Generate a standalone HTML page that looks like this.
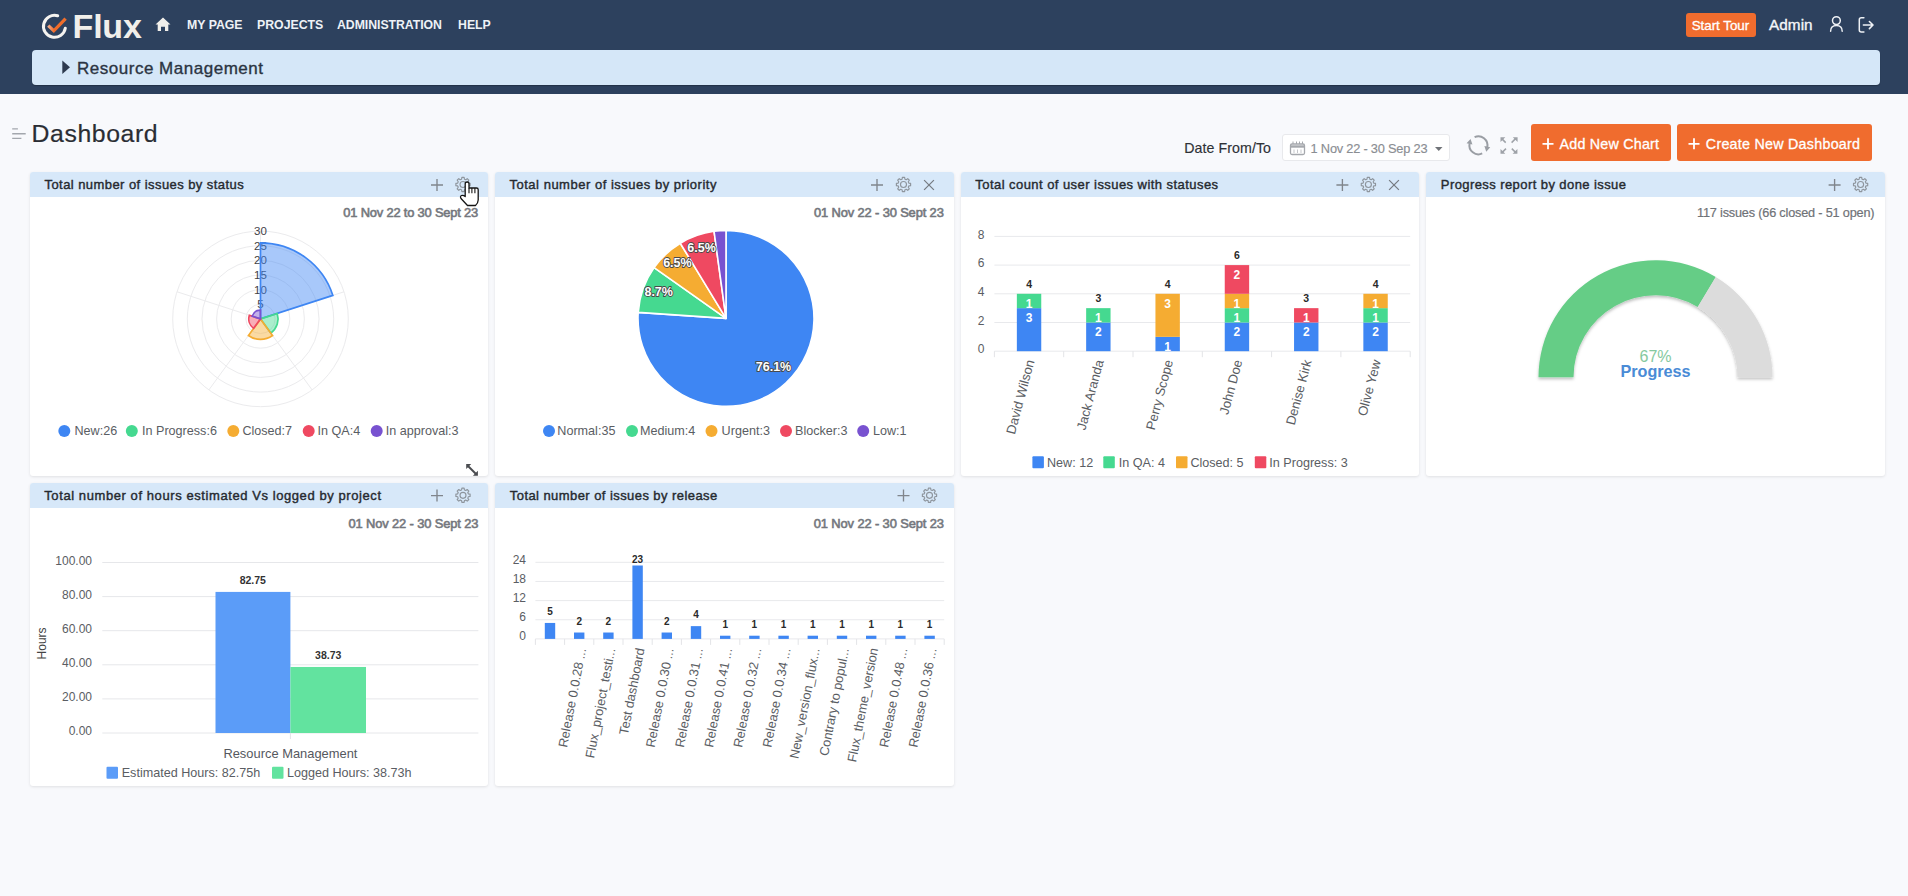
<!DOCTYPE html><html><head><meta charset="utf-8"><title>Dashboard</title><style>
*{box-sizing:border-box;margin:0;padding:0}
html,body{width:1908px;height:896px;overflow:hidden}
body{background:#f8f9fc;font-family:"Liberation Sans",sans-serif;position:relative;color:#2b2b2b}
.abs{position:absolute}
.hdr{left:0;top:0;width:1908px;height:94px;background:#2d415e}
.nav{color:#eef2f7;font-weight:bold;font-size:12.3px;top:17px;line-height:16px;white-space:nowrap}
.crumb{left:32px;top:50px;width:1848px;height:35px;background:#d5e7f8;border-radius:4px;box-shadow:0 1px 1px rgba(0,0,0,.25)}
.card{background:#fff;border-radius:3px;box-shadow:0 1px 3px rgba(0,0,0,.10)}
.chead{position:absolute;left:0;top:0;right:0;height:25px;background:#d7e8f9;border-radius:3px 3px 0 0}
.ctitle{position:absolute;left:14px;top:5px;font-size:13px;font-weight:normal;-webkit-text-stroke:0.4px #262a30;color:#262a30;white-space:nowrap;line-height:16px}
.btn{background:#f06c2e;color:#fff;border-radius:3px;font-size:14px;white-space:nowrap}
</style></head><body>
<div class="abs hdr"></div>
<div class="abs crumb"></div>
<svg class="abs" style="left:0;top:0" width="520" height="94" viewBox="0 0 520 94">
<defs><linearGradient id="ckg" x1="48" y1="0" x2="66" y2="0" gradientUnits="userSpaceOnUse"><stop offset="0" stop-color="#f7b08e"/><stop offset="0.35" stop-color="#f06a28"/><stop offset="1" stop-color="#ee6f2c"/></linearGradient></defs>
<path d="M 57.7 15.8 A 11 11 0 1 0 65.3 28.2" fill="none" stroke="#f5f3f0" stroke-width="3" stroke-linecap="round"/>
<path d="M 48.3 25.6 L 53.8 30.8 L 65.6 18.6" fill="none" stroke="url(#ckg)" stroke-width="3.3" stroke-linejoin="miter"/>
<path d="M 155.5 24.6 L 163 17.6 L 170.5 24.6 L 168.3 24.6 L 168.3 31 L 165 31 L 165 26.8 L 161 26.8 L 161 31 L 157.7 31 L 157.7 24.6 Z" fill="#f1efea"/>
</svg>
<div class="abs nav" style="left:187px">MY PAGE</div>
<div class="abs nav" style="left:257px">PROJECTS</div>
<div class="abs nav" style="left:337px;letter-spacing:-0.05px">ADMINISTRATION</div>
<div class="abs nav" style="left:458px">HELP</div>
<svg class="abs" style="left:1820px;top:10px" width="70" height="30" viewBox="1820 10 70 30">
<circle cx="1836.4" cy="20.6" r="3.9" fill="none" stroke="#eef1f5" stroke-width="1.5"/>
<path d="M 1830.6 31.2 C 1830.6 27.5 1833 25.4 1836.4 25.4 C 1839.8 25.4 1842.2 27.5 1842.2 31.2" fill="none" stroke="#eef1f5" stroke-width="1.5" stroke-linecap="round"/>
<path d="M 1863.9 17.8 H 1861.3 Q 1859.3 17.8 1859.3 19.8 V 29.9 Q 1859.3 31.9 1861.3 31.9 H 1863.9" fill="none" stroke="#eef1f5" stroke-width="1.5" stroke-linecap="round"/>
<path d="M 1863.4 25 H 1872.6 M 1869.4 21.5 L 1873 25 L 1869.4 28.6" fill="none" stroke="#eef1f5" stroke-width="1.6" stroke-linecap="round" stroke-linejoin="round"/>
</svg>
<svg class="abs" style="left:60px;top:58px" width="14" height="18" viewBox="60 58 14 18"><path d="M 62.3 60.5 L 70 67.3 L 62.3 74 Z" fill="#2d3a4f"/></svg>
<svg class="abs" style="left:8px;top:122px" width="22" height="22" viewBox="8 122 22 22">
<path d="M 12.2 128.9 H 17.9 M 12.2 133.8 H 25.7 M 12.2 138.4 H 21.4" stroke="#a3a7ad" stroke-width="1.4"/></svg>
<div class="abs" style="left:1282px;top:134px;width:168px;height:27px;background:#fff;border:1px solid #e8e9ec;border-radius:3px"></div>
<div class="abs btn" style="left:1686px;top:13px;width:70px;height:23.5px"></div>
<svg class="abs" style="left:1280px;top:130px" width="260" height="35" viewBox="1280 130 260 35">
<rect x="1290.5" y="144" width="14" height="10.5" rx="1.5" fill="none" stroke="#a5a8ad" stroke-width="1.3"/>
<path d="M 1290.5 146.5 H 1304.5" stroke="#a5a8ad" stroke-width="2.4"/>
<path d="M 1293 141.5 V 144 M 1296.5 141.5 V 144 M 1299.5 141.5 V 144 M 1302.5 141.5 V 144" stroke="#a5a8ad" stroke-width="1"/>
<path d="M 1294 149.5 V 153 M 1297.5 149.5 V 153 M 1301 149.5 V 153" stroke="#c5c7cb" stroke-width="1"/>
<path d="M 1435 147 L 1442.5 147 L 1438.75 151 Z" fill="#707378"/>
<path d="M 1474.60 137.14 A 9.0 9.0 0 0 1 1487.20 147.17 M 1482.20 153.46 A 9.0 9.0 0 0 1 1469.60 143.43" fill="none" stroke="#9a9ea4" stroke-width="2"/>
<path d="M 1486.25 151.67 L 1490.24 147.31 L 1484.37 146.06 Z M 1470.55 138.93 L 1466.56 143.29 L 1472.43 144.54 Z" fill="#9a9ea4"/>
<path d="M 1505.7 142.6 L 1502 138.9 M 1511.6 142.6 L 1515.8 138.4 M 1506 148.6 L 1502 152.6 M 1511.8 148.6 L 1515.8 152.6" stroke="#9ea2a8" stroke-width="1.5" fill="none"/>
<path d="M 1500.5 137.3 H 1505.3 L 1500.5 142.1 Z M 1517.6 137.3 H 1512.8 L 1517.6 142.1 Z M 1500.5 153.8 H 1505.3 L 1500.5 149 Z M 1517.4 153.8 H 1512.6 L 1517.4 149 Z" fill="#9ea2a8"/>
</svg>
<div class="abs btn" style="left:1531px;top:124px;width:140px;height:37px"></div>
<div class="abs btn" style="left:1677px;top:124px;width:195px;height:37px"></div>
<svg class="abs" style="left:1530px;top:130px" width="180" height="30" viewBox="1530 130 180 30">
<path d="M 1542.5 143.8 H 1553.5 M 1548 138.3 V 149.3 M 1688.5 143.8 H 1699.5 M 1694 138.3 V 149.3" stroke="#fff" stroke-width="1.8"/></svg>
<div class="abs card" style="left:30px;top:172px;width:458px;height:304px"><div class="chead"></div></div>
<div class="abs card" style="left:495px;top:172px;width:459px;height:304px"><div class="chead"></div></div>
<div class="abs card" style="left:961px;top:172px;width:458px;height:304px"><div class="chead"></div></div>
<div class="abs card" style="left:1426px;top:172px;width:459px;height:304px"><div class="chead"></div></div>
<div class="abs card" style="left:30px;top:483px;width:458px;height:303px"><div class="chead"></div></div>
<div class="abs card" style="left:495px;top:483px;width:459px;height:303px"><div class="chead"></div></div>
<svg class="abs" style="left:0;top:0;font-family:'Liberation Sans',sans-serif" width="1908" height="896" viewBox="0 0 1908 896"><text x="72.6" y="37.8" font-size="34" fill="#f1efea" font-weight="bold" textLength="69.2" lengthAdjust="spacing">Flux</text><text x="1691.7" y="29.5" font-size="13.4" fill="#ffffff" font-weight="normal" textLength="57.5" lengthAdjust="spacing" stroke="#ffffff" stroke-width="0.3">Start Tour</text><text x="1769" y="29.5" font-size="15.3" fill="#f4f6f9" font-weight="normal" textLength="43.6" lengthAdjust="spacing" stroke="#f4f6f9" stroke-width="0.35">Admin</text><text x="77" y="73.8" font-size="17" fill="#2b3442" font-weight="normal" textLength="186.0" lengthAdjust="spacing" stroke="#2b3442" stroke-width="0.35">Resource Management</text><text x="31.5" y="141.6" font-size="24.8" fill="#2a2d33" font-weight="normal" textLength="126.1" lengthAdjust="spacing" stroke="#2a2d33" stroke-width="0.2">Dashboard</text><text x="1184.2" y="152.5" font-size="14.2" fill="#2e3136" font-weight="normal" textLength="86.8" lengthAdjust="spacing" stroke="#2e3136" stroke-width="0.15">Date From/To</text><text x="1310.6" y="153" font-size="12.8" fill="#8a8d92" font-weight="normal" textLength="116.9" lengthAdjust="spacing" stroke="#8a8d92" stroke-width="0.15">1 Nov 22 - 30 Sep 23</text><text x="1559.5" y="148.6" font-size="14.3" fill="#ffffff" font-weight="normal" textLength="99.5" lengthAdjust="spacing" stroke="#ffffff" stroke-width="0.3">Add New Chart</text><text x="1705.8" y="148.6" font-size="14.3" fill="#ffffff" font-weight="normal" textLength="154.2" lengthAdjust="spacing" stroke="#ffffff" stroke-width="0.3">Create New Dashboard</text><text x="44.5" y="189" font-size="13" fill="#262a30" font-weight="normal" textLength="199.2" lengthAdjust="spacing" stroke="#262a30" stroke-width="0.4">Total number of issues by status</text><text x="509.5" y="189" font-size="13" fill="#262a30" font-weight="normal" textLength="206.9" lengthAdjust="spacing" stroke="#262a30" stroke-width="0.4">Total number of issues by priority</text><text x="975.3" y="189" font-size="13" fill="#262a30" font-weight="normal" textLength="242.8" lengthAdjust="spacing" stroke="#262a30" stroke-width="0.4">Total count of user issues with statuses</text><text x="1440.8" y="189" font-size="13" fill="#262a30" font-weight="normal" textLength="185.2" lengthAdjust="spacing" stroke="#262a30" stroke-width="0.4">Progress report by done issue</text><text x="44.3" y="500" font-size="13" fill="#262a30" font-weight="normal" textLength="336.7" lengthAdjust="spacing" stroke="#262a30" stroke-width="0.4">Total number of hours estimated Vs logged by project</text><text x="509.8" y="500" font-size="13" fill="#262a30" font-weight="normal" textLength="207.4" lengthAdjust="spacing" stroke="#262a30" stroke-width="0.4">Total number of issues by release</text><path d="M 431 185 H 443 M 437 179 V 191" stroke="#80858c" stroke-width="1.35"/><path d="M 460.90 179.42 L 461.58 179.19 L 461.87 177.39 L 464.13 177.39 L 464.42 179.19 L 465.10 179.42 L 465.75 179.74 L 467.23 178.68 L 468.82 180.27 L 467.76 181.75 L 468.08 182.40 L 468.31 183.08 L 470.11 183.37 L 470.11 185.63 L 468.31 185.92 L 468.08 186.60 L 467.76 187.25 L 468.82 188.73 L 467.23 190.32 L 465.75 189.26 L 465.10 189.58 L 464.42 189.81 L 464.13 191.61 L 461.87 191.61 L 461.58 189.81 L 460.90 189.58 L 460.25 189.26 L 458.77 190.32 L 457.18 188.73 L 458.24 187.25 L 457.92 186.60 L 457.69 185.92 L 455.89 185.63 L 455.89 183.37 L 457.69 183.08 L 457.92 182.40 L 458.24 181.75 L 457.18 180.27 L 458.77 178.68 L 460.25 179.74 Z" fill="none" stroke="#8e959d" stroke-width="1.15" stroke-linejoin="round"/><circle cx="463" cy="184.5" r="3" fill="none" stroke="#8e959d" stroke-width="1.15"/><path d="M 871 185 H 883 M 877 179 V 191" stroke="#80858c" stroke-width="1.35"/><path d="M 901.40 179.42 L 902.08 179.19 L 902.37 177.39 L 904.63 177.39 L 904.92 179.19 L 905.60 179.42 L 906.25 179.74 L 907.73 178.68 L 909.32 180.27 L 908.26 181.75 L 908.58 182.40 L 908.81 183.08 L 910.61 183.37 L 910.61 185.63 L 908.81 185.92 L 908.58 186.60 L 908.26 187.25 L 909.32 188.73 L 907.73 190.32 L 906.25 189.26 L 905.60 189.58 L 904.92 189.81 L 904.63 191.61 L 902.37 191.61 L 902.08 189.81 L 901.40 189.58 L 900.75 189.26 L 899.27 190.32 L 897.68 188.73 L 898.74 187.25 L 898.42 186.60 L 898.19 185.92 L 896.39 185.63 L 896.39 183.37 L 898.19 183.08 L 898.42 182.40 L 898.74 181.75 L 897.68 180.27 L 899.27 178.68 L 900.75 179.74 Z" fill="none" stroke="#8e959d" stroke-width="1.15" stroke-linejoin="round"/><circle cx="903.5" cy="184.5" r="3" fill="none" stroke="#8e959d" stroke-width="1.15"/><path d="M 924.1 180.1 L 933.9 189.9 M 933.9 180.1 L 924.1 189.9" stroke="#767b82" stroke-width="1.25"/><path d="M 1336.4 185 H 1348.4 M 1342.4 179 V 191" stroke="#80858c" stroke-width="1.35"/><path d="M 1366.30 179.42 L 1366.98 179.19 L 1367.27 177.39 L 1369.53 177.39 L 1369.82 179.19 L 1370.50 179.42 L 1371.15 179.74 L 1372.63 178.68 L 1374.22 180.27 L 1373.16 181.75 L 1373.48 182.40 L 1373.71 183.08 L 1375.51 183.37 L 1375.51 185.63 L 1373.71 185.92 L 1373.48 186.60 L 1373.16 187.25 L 1374.22 188.73 L 1372.63 190.32 L 1371.15 189.26 L 1370.50 189.58 L 1369.82 189.81 L 1369.53 191.61 L 1367.27 191.61 L 1366.98 189.81 L 1366.30 189.58 L 1365.65 189.26 L 1364.17 190.32 L 1362.58 188.73 L 1363.64 187.25 L 1363.32 186.60 L 1363.09 185.92 L 1361.29 185.63 L 1361.29 183.37 L 1363.09 183.08 L 1363.32 182.40 L 1363.64 181.75 L 1362.58 180.27 L 1364.17 178.68 L 1365.65 179.74 Z" fill="none" stroke="#8e959d" stroke-width="1.15" stroke-linejoin="round"/><circle cx="1368.4" cy="184.5" r="3" fill="none" stroke="#8e959d" stroke-width="1.15"/><path d="M 1389.1 180.1 L 1398.9 189.9 M 1398.9 180.1 L 1389.1 189.9" stroke="#767b82" stroke-width="1.25"/><path d="M 1828.6 185 H 1840.6 M 1834.6 179 V 191" stroke="#80858c" stroke-width="1.35"/><path d="M 1858.50 179.42 L 1859.18 179.19 L 1859.47 177.39 L 1861.73 177.39 L 1862.02 179.19 L 1862.70 179.42 L 1863.35 179.74 L 1864.83 178.68 L 1866.42 180.27 L 1865.36 181.75 L 1865.68 182.40 L 1865.91 183.08 L 1867.71 183.37 L 1867.71 185.63 L 1865.91 185.92 L 1865.68 186.60 L 1865.36 187.25 L 1866.42 188.73 L 1864.83 190.32 L 1863.35 189.26 L 1862.70 189.58 L 1862.02 189.81 L 1861.73 191.61 L 1859.47 191.61 L 1859.18 189.81 L 1858.50 189.58 L 1857.85 189.26 L 1856.37 190.32 L 1854.78 188.73 L 1855.84 187.25 L 1855.52 186.60 L 1855.29 185.92 L 1853.49 185.63 L 1853.49 183.37 L 1855.29 183.08 L 1855.52 182.40 L 1855.84 181.75 L 1854.78 180.27 L 1856.37 178.68 L 1857.85 179.74 Z" fill="none" stroke="#8e959d" stroke-width="1.15" stroke-linejoin="round"/><circle cx="1860.6" cy="184.5" r="3" fill="none" stroke="#8e959d" stroke-width="1.15"/><path d="M 431 495.6 H 443 M 437 489.6 V 501.6" stroke="#80858c" stroke-width="1.35"/><path d="M 460.90 490.22 L 461.58 489.99 L 461.87 488.19 L 464.13 488.19 L 464.42 489.99 L 465.10 490.22 L 465.75 490.54 L 467.23 489.48 L 468.82 491.07 L 467.76 492.55 L 468.08 493.20 L 468.31 493.88 L 470.11 494.17 L 470.11 496.43 L 468.31 496.72 L 468.08 497.40 L 467.76 498.05 L 468.82 499.53 L 467.23 501.12 L 465.75 500.06 L 465.10 500.38 L 464.42 500.61 L 464.13 502.41 L 461.87 502.41 L 461.58 500.61 L 460.90 500.38 L 460.25 500.06 L 458.77 501.12 L 457.18 499.53 L 458.24 498.05 L 457.92 497.40 L 457.69 496.72 L 455.89 496.43 L 455.89 494.17 L 457.69 493.88 L 457.92 493.20 L 458.24 492.55 L 457.18 491.07 L 458.77 489.48 L 460.25 490.54 Z" fill="none" stroke="#8e959d" stroke-width="1.15" stroke-linejoin="round"/><circle cx="463" cy="495.3" r="3" fill="none" stroke="#8e959d" stroke-width="1.15"/><path d="M 897.5 495.6 H 909.5 M 903.5 489.6 V 501.6" stroke="#80858c" stroke-width="1.35"/><path d="M 927.40 490.22 L 928.08 489.99 L 928.37 488.19 L 930.63 488.19 L 930.92 489.99 L 931.60 490.22 L 932.25 490.54 L 933.73 489.48 L 935.32 491.07 L 934.26 492.55 L 934.58 493.20 L 934.81 493.88 L 936.61 494.17 L 936.61 496.43 L 934.81 496.72 L 934.58 497.40 L 934.26 498.05 L 935.32 499.53 L 933.73 501.12 L 932.25 500.06 L 931.60 500.38 L 930.92 500.61 L 930.63 502.41 L 928.37 502.41 L 928.08 500.61 L 927.40 500.38 L 926.75 500.06 L 925.27 501.12 L 923.68 499.53 L 924.74 498.05 L 924.42 497.40 L 924.19 496.72 L 922.39 496.43 L 922.39 494.17 L 924.19 493.88 L 924.42 493.20 L 924.74 492.55 L 923.68 491.07 L 925.27 489.48 L 926.75 490.54 Z" fill="none" stroke="#8e959d" stroke-width="1.15" stroke-linejoin="round"/><circle cx="929.5" cy="495.3" r="3" fill="none" stroke="#8e959d" stroke-width="1.15"/><text x="343.3" y="217.2" font-size="12.9" fill="#74777d" font-weight="normal" textLength="134.9" lengthAdjust="spacing" stroke="#74777d" stroke-width="0.6">01 Nov 22 to 30 Sept 23</text><text x="814" y="217.2" font-size="12.9" fill="#74777d" font-weight="normal" textLength="129.8" lengthAdjust="spacing" stroke="#74777d" stroke-width="0.6">01 Nov 22 - 30 Sept 23</text><text x="348.4" y="528.3" font-size="12.9" fill="#74777d" font-weight="normal" textLength="130.0" lengthAdjust="spacing" stroke="#74777d" stroke-width="0.6">01 Nov 22 - 30 Sept 23</text><text x="813.8" y="528.3" font-size="12.9" fill="#74777d" font-weight="normal" textLength="130.1" lengthAdjust="spacing" stroke="#74777d" stroke-width="0.6">01 Nov 22 - 30 Sept 23</text><text x="1697" y="217" font-size="12.7" fill="#6f7277" font-weight="normal" textLength="177.5" lengthAdjust="spacing" stroke="#6f7277" stroke-width="0.2">117 issues (66 closed - 51 open)</text><circle cx="260.5" cy="318.9" r="14.63" fill="none" stroke="#ebebed" stroke-width="1"/><circle cx="260.5" cy="318.9" r="29.27" fill="none" stroke="#ebebed" stroke-width="1"/><circle cx="260.5" cy="318.9" r="43.90" fill="none" stroke="#ebebed" stroke-width="1"/><circle cx="260.5" cy="318.9" r="58.53" fill="none" stroke="#ebebed" stroke-width="1"/><circle cx="260.5" cy="318.9" r="73.17" fill="none" stroke="#ebebed" stroke-width="1"/><circle cx="260.5" cy="318.9" r="87.80" fill="none" stroke="#ebebed" stroke-width="1"/><line x1="260.5" y1="318.9" x2="260.50" y2="231.10" stroke="#ebebed" stroke-width="1"/><line x1="260.5" y1="318.9" x2="344.00" y2="291.77" stroke="#ebebed" stroke-width="1"/><line x1="260.5" y1="318.9" x2="312.11" y2="389.93" stroke="#ebebed" stroke-width="1"/><line x1="260.5" y1="318.9" x2="208.89" y2="389.93" stroke="#ebebed" stroke-width="1"/><line x1="260.5" y1="318.9" x2="177.00" y2="291.77" stroke="#ebebed" stroke-width="1"/><text x="260.5" y="308.26666666666665" font-size="11.5" fill="#3f4247" text-anchor="middle" font-weight="normal" >5</text><text x="260.5" y="293.6333333333333" font-size="11.5" fill="#3f4247" text-anchor="middle" font-weight="normal" >10</text><text x="260.5" y="279.0" font-size="11.5" fill="#3f4247" text-anchor="middle" font-weight="normal" >15</text><text x="260.5" y="264.3666666666667" font-size="11.5" fill="#3f4247" text-anchor="middle" font-weight="normal" >20</text><text x="260.5" y="249.7333333333333" font-size="11.5" fill="#3f4247" text-anchor="middle" font-weight="normal" >25</text><text x="260.5" y="235.09999999999997" font-size="11.5" fill="#3f4247" text-anchor="middle" font-weight="normal" >30</text><path d="M 260.5 318.9 L 260.50 242.81 A 76.09 76.09 0 0 1 332.87 295.39 Z" fill="#3e86f3" fill-opacity="0.45" stroke="#3e86f3" stroke-width="1.7"/><path d="M 260.5 318.9 L 277.20 313.47 A 17.56 17.56 0 0 1 270.82 333.11 Z" fill="#45d990" fill-opacity="0.45" stroke="#45d990" stroke-width="1.7"/><path d="M 260.5 318.9 L 272.54 335.47 A 20.49 20.49 0 0 1 248.46 335.47 Z" fill="#f5ac32" fill-opacity="0.45" stroke="#f5ac32" stroke-width="1.7"/><path d="M 260.5 318.9 L 253.62 328.37 A 11.71 11.71 0 0 1 249.37 315.28 Z" fill="#ef4961" fill-opacity="0.45" stroke="#ef4961" stroke-width="1.7"/><path d="M 260.5 318.9 L 252.15 316.19 A 8.78 8.78 0 0 1 260.50 310.12 Z" fill="#7852d0" fill-opacity="0.45" stroke="#7852d0" stroke-width="1.7"/><circle cx="64.3" cy="431.0" r="6" fill="#3e86f3"/><text x="74.5" y="434.8" font-size="12.6" fill="#5a5d63" text-anchor="start" font-weight="normal" >New:26</text><circle cx="131.8" cy="431.0" r="6" fill="#45d990"/><text x="142" y="434.8" font-size="12.6" fill="#5a5d63" text-anchor="start" font-weight="normal" >In Progress:6</text><circle cx="233.3" cy="431.0" r="6" fill="#f5ac32"/><text x="242.4" y="434.8" font-size="12.6" fill="#5a5d63" text-anchor="start" font-weight="normal" >Closed:7</text><circle cx="308.7" cy="431.0" r="6" fill="#ef4961"/><text x="317.5" y="434.8" font-size="12.6" fill="#5a5d63" text-anchor="start" font-weight="normal" >In QA:4</text><circle cx="376.7" cy="431.0" r="6" fill="#7852d0"/><text x="385.7" y="434.8" font-size="12.6" fill="#5a5d63" text-anchor="start" font-weight="normal" >In approval:3</text><path d="M 468 466 L 476 474" stroke="#4a4c50" stroke-width="2" fill="none"/><path d="M 466.2 463.9 L 471.2 463.9 L 466.2 468.9 Z M 477.9 475.8 L 472.9 475.8 L 477.9 470.8 Z" fill="#4a4c50"/><path d="M 726 318.4 L 726.00 230.40 A 88.00 88.00 0 1 1 638.21 312.39 Z" fill="#3e86f3" stroke="#fff" stroke-width="1.6" stroke-linejoin="round"/><path d="M 726 318.4 L 638.21 312.39 A 88.00 88.00 0 0 1 654.11 267.65 Z" fill="#45d990" stroke="#fff" stroke-width="1.6" stroke-linejoin="round"/><path d="M 726 318.4 L 654.11 267.65 A 88.00 88.00 0 0 1 680.28 243.21 Z" fill="#f5ac32" stroke="#fff" stroke-width="1.6" stroke-linejoin="round"/><path d="M 726 318.4 L 680.28 243.21 A 88.00 88.00 0 0 1 714.02 231.22 Z" fill="#ef4961" stroke="#fff" stroke-width="1.6" stroke-linejoin="round"/><path d="M 726 318.4 L 714.02 231.22 A 88.00 88.00 0 0 1 726.00 230.40 Z" fill="#7852d0" stroke="#fff" stroke-width="1.6" stroke-linejoin="round"/><text x="773.5" y="370.5" font-size="12.5" fill="#fff" text-anchor="middle" font-weight="bold" paint-order="stroke" stroke="#4a4a4a" stroke-width="1.8" stroke-linejoin="round">76.1%</text><text x="658.7" y="295.5" font-size="12.5" fill="#fff" text-anchor="middle" font-weight="bold" paint-order="stroke" stroke="#4a4a4a" stroke-width="1.8" stroke-linejoin="round">8.7%</text><text x="677.4" y="267" font-size="12.5" fill="#fff" text-anchor="middle" font-weight="bold" paint-order="stroke" stroke="#4a4a4a" stroke-width="1.8" stroke-linejoin="round">6.5%</text><text x="701.6" y="252" font-size="12.5" fill="#fff" text-anchor="middle" font-weight="bold" paint-order="stroke" stroke="#4a4a4a" stroke-width="1.8" stroke-linejoin="round">6.5%</text><circle cx="549" cy="431.0" r="6" fill="#3e86f3"/><text x="557.3" y="434.8" font-size="12.6" fill="#5a5d63" text-anchor="start" font-weight="normal" >Normal:35</text><circle cx="632" cy="431.0" r="6" fill="#45d990"/><text x="640" y="434.8" font-size="12.6" fill="#5a5d63" text-anchor="start" font-weight="normal" >Medium:4</text><circle cx="711.5" cy="431.0" r="6" fill="#f5ac32"/><text x="721.6" y="434.8" font-size="12.6" fill="#5a5d63" text-anchor="start" font-weight="normal" >Urgent:3</text><circle cx="786" cy="431.0" r="6" fill="#ef4961"/><text x="795" y="434.8" font-size="12.6" fill="#5a5d63" text-anchor="start" font-weight="normal" >Blocker:3</text><circle cx="863.2" cy="431.0" r="6" fill="#7852d0"/><text x="872.9" y="434.8" font-size="12.6" fill="#5a5d63" text-anchor="start" font-weight="normal" >Low:1</text><line x1="994.4" y1="351.20" x2="1410.2" y2="351.20" stroke="#e8e9ec" stroke-width="1"/><text x="984.5" y="353.4" font-size="12" fill="#5a5d63" text-anchor="end" font-weight="normal" >0</text><line x1="994.4" y1="322.50" x2="1410.2" y2="322.50" stroke="#e8e9ec" stroke-width="1"/><text x="984.5" y="324.7" font-size="12" fill="#5a5d63" text-anchor="end" font-weight="normal" >2</text><line x1="994.4" y1="293.80" x2="1410.2" y2="293.80" stroke="#e8e9ec" stroke-width="1"/><text x="984.5" y="296.0" font-size="12" fill="#5a5d63" text-anchor="end" font-weight="normal" >4</text><line x1="994.4" y1="265.10" x2="1410.2" y2="265.10" stroke="#e8e9ec" stroke-width="1"/><text x="984.5" y="267.3" font-size="12" fill="#5a5d63" text-anchor="end" font-weight="normal" >6</text><line x1="994.4" y1="236.40" x2="1410.2" y2="236.40" stroke="#e8e9ec" stroke-width="1"/><text x="984.5" y="238.59999999999997" font-size="12" fill="#5a5d63" text-anchor="end" font-weight="normal" >8</text><line x1="994.40" y1="351.2" x2="994.40" y2="357.2" stroke="#e3e4e7" stroke-width="1"/><line x1="1063.70" y1="351.2" x2="1063.70" y2="357.2" stroke="#e3e4e7" stroke-width="1"/><line x1="1133.00" y1="351.2" x2="1133.00" y2="357.2" stroke="#e3e4e7" stroke-width="1"/><line x1="1202.30" y1="351.2" x2="1202.30" y2="357.2" stroke="#e3e4e7" stroke-width="1"/><line x1="1271.60" y1="351.2" x2="1271.60" y2="357.2" stroke="#e3e4e7" stroke-width="1"/><line x1="1340.90" y1="351.2" x2="1340.90" y2="357.2" stroke="#e3e4e7" stroke-width="1"/><line x1="1410.20" y1="351.2" x2="1410.20" y2="357.2" stroke="#e3e4e7" stroke-width="1"/><rect x="1016.85" y="308.15" width="24.4" height="43.05" fill="#3e86f3"/><rect x="1016.85" y="293.80" width="24.4" height="14.35" fill="#45d990"/><text transform="translate(1034.55,361.2) rotate(-75)" font-size="13.1" fill="#5a5d63" text-anchor="end">David Wilson</text><rect x="1086.15" y="322.50" width="24.4" height="28.70" fill="#3e86f3"/><rect x="1086.15" y="308.15" width="24.4" height="14.35" fill="#45d990"/><text transform="translate(1103.85,361.2) rotate(-75)" font-size="13.1" fill="#5a5d63" text-anchor="end">Jack Aranda</text><rect x="1155.45" y="336.85" width="24.4" height="14.35" fill="#3e86f3"/><rect x="1155.45" y="293.80" width="24.4" height="43.05" fill="#f5ac32"/><text transform="translate(1173.15,361.2) rotate(-75)" font-size="13.1" fill="#5a5d63" text-anchor="end">Perry Scope</text><rect x="1224.75" y="322.50" width="24.4" height="28.70" fill="#3e86f3"/><rect x="1224.75" y="308.15" width="24.4" height="14.35" fill="#45d990"/><rect x="1224.75" y="293.80" width="24.4" height="14.35" fill="#f5ac32"/><rect x="1224.75" y="265.10" width="24.4" height="28.70" fill="#ef4961"/><text transform="translate(1242.45,361.2) rotate(-75)" font-size="13.1" fill="#5a5d63" text-anchor="end">John Doe</text><rect x="1294.05" y="322.50" width="24.4" height="28.70" fill="#3e86f3"/><rect x="1294.05" y="308.15" width="24.4" height="14.35" fill="#ef4961"/><text transform="translate(1311.75,361.2) rotate(-75)" font-size="13.1" fill="#5a5d63" text-anchor="end">Denise Kirk</text><rect x="1363.35" y="322.50" width="24.4" height="28.70" fill="#3e86f3"/><rect x="1363.35" y="308.15" width="24.4" height="14.35" fill="#45d990"/><rect x="1363.35" y="293.80" width="24.4" height="14.35" fill="#f5ac32"/><text transform="translate(1381.05,361.2) rotate(-75)" font-size="13.1" fill="#5a5d63" text-anchor="end">Olive Yew</text><text x="1029.05" y="321.95" font-size="12" fill="#fff" text-anchor="middle" font-weight="bold" >3</text><text x="1029.05" y="307.60" font-size="12" fill="#fff" text-anchor="middle" font-weight="bold" >1</text><text x="1029.05" y="287.80" font-size="10.5" fill="#2a2a2a" text-anchor="middle" font-weight="bold" >4</text><text x="1098.35" y="336.30" font-size="12" fill="#fff" text-anchor="middle" font-weight="bold" >2</text><text x="1098.35" y="321.95" font-size="12" fill="#fff" text-anchor="middle" font-weight="bold" >1</text><text x="1098.35" y="302.15" font-size="10.5" fill="#2a2a2a" text-anchor="middle" font-weight="bold" >3</text><text x="1167.65" y="350.65" font-size="12" fill="#fff" text-anchor="middle" font-weight="bold" >1</text><text x="1167.65" y="307.60" font-size="12" fill="#fff" text-anchor="middle" font-weight="bold" >3</text><text x="1167.65" y="287.80" font-size="10.5" fill="#2a2a2a" text-anchor="middle" font-weight="bold" >4</text><text x="1236.95" y="336.30" font-size="12" fill="#fff" text-anchor="middle" font-weight="bold" >2</text><text x="1236.95" y="321.95" font-size="12" fill="#fff" text-anchor="middle" font-weight="bold" >1</text><text x="1236.95" y="307.60" font-size="12" fill="#fff" text-anchor="middle" font-weight="bold" >1</text><text x="1236.95" y="278.90" font-size="12" fill="#fff" text-anchor="middle" font-weight="bold" >2</text><text x="1236.95" y="259.10" font-size="10.5" fill="#2a2a2a" text-anchor="middle" font-weight="bold" >6</text><text x="1306.25" y="336.30" font-size="12" fill="#fff" text-anchor="middle" font-weight="bold" >2</text><text x="1306.25" y="321.95" font-size="12" fill="#fff" text-anchor="middle" font-weight="bold" >1</text><text x="1306.25" y="302.15" font-size="10.5" fill="#2a2a2a" text-anchor="middle" font-weight="bold" >3</text><text x="1375.55" y="336.30" font-size="12" fill="#fff" text-anchor="middle" font-weight="bold" >2</text><text x="1375.55" y="321.95" font-size="12" fill="#fff" text-anchor="middle" font-weight="bold" >1</text><text x="1375.55" y="307.60" font-size="12" fill="#fff" text-anchor="middle" font-weight="bold" >1</text><text x="1375.55" y="287.80" font-size="10.5" fill="#2a2a2a" text-anchor="middle" font-weight="bold" >4</text><rect x="1032.4" y="456.3" width="11.5" height="12" rx="1" fill="#3e86f3"/><text x="1047" y="466.8" font-size="12.6" fill="#5a5d63" text-anchor="start" font-weight="normal" >New: 12</text><rect x="1103.3" y="456.3" width="11.5" height="12" rx="1" fill="#45d990"/><text x="1118.8" y="466.8" font-size="12.6" fill="#5a5d63" text-anchor="start" font-weight="normal" >In QA: 4</text><rect x="1176" y="456.3" width="11.5" height="12" rx="1" fill="#f5ac32"/><text x="1190.4" y="466.8" font-size="12.6" fill="#5a5d63" text-anchor="start" font-weight="normal" >Closed: 5</text><rect x="1254.8" y="456.3" width="11.5" height="12" rx="1" fill="#ef4961"/><text x="1269.3" y="466.8" font-size="12.6" fill="#5a5d63" text-anchor="start" font-weight="normal" >In Progress: 3</text><defs><filter id="gsh" x="-20%" y="-20%" width="140%" height="140%"><feDropShadow dx="0" dy="2" stdDeviation="1.5" flood-color="#000" flood-opacity="0.25"/></filter></defs><g filter="url(#gsh)"><path d="M 1538.50 377.30 A 117 117 0 0 1 1715.76 277.01 L 1697.73 307.01 A 82 82 0 0 0 1573.50 377.30 Z" fill="#65cd86"/><path d="M 1715.76 277.01 A 117 117 0 0 1 1772.50 377.30 L 1737.50 377.30 A 82 82 0 0 0 1697.73 307.01 Z" fill="#dcdcdc"/></g><text x="1655.5" y="361.5" font-size="16" fill="#85c9a0" text-anchor="middle" font-weight="normal" >67%</text><text x="1655.5" y="377" font-size="16.2" fill="#4a8bd6" text-anchor="middle" font-weight="bold" >Progress</text><line x1="102.3" y1="733.00" x2="478.4" y2="733.00" stroke="#e6e7ea" stroke-width="1"/><text x="92" y="735.3" font-size="12" fill="#5a5d63" text-anchor="end" font-weight="normal" >0.00</text><line x1="102.3" y1="698.90" x2="478.4" y2="698.90" stroke="#e6e7ea" stroke-width="1"/><text x="92" y="701.1999999999999" font-size="12" fill="#5a5d63" text-anchor="end" font-weight="normal" >20.00</text><line x1="102.3" y1="664.80" x2="478.4" y2="664.80" stroke="#e6e7ea" stroke-width="1"/><text x="92" y="667.0999999999999" font-size="12" fill="#5a5d63" text-anchor="end" font-weight="normal" >40.00</text><line x1="102.3" y1="630.70" x2="478.4" y2="630.70" stroke="#e6e7ea" stroke-width="1"/><text x="92" y="633.0" font-size="12" fill="#5a5d63" text-anchor="end" font-weight="normal" >60.00</text><line x1="102.3" y1="596.60" x2="478.4" y2="596.60" stroke="#e6e7ea" stroke-width="1"/><text x="92" y="598.9" font-size="12" fill="#5a5d63" text-anchor="end" font-weight="normal" >80.00</text><line x1="102.3" y1="562.50" x2="478.4" y2="562.50" stroke="#e6e7ea" stroke-width="1"/><text x="92" y="564.8" font-size="12" fill="#5a5d63" text-anchor="end" font-weight="normal" >100.00</text><line x1="290.4" y1="733" x2="290.4" y2="739" stroke="#e3e4e7"/><rect x="215.5" y="591.91" width="74.9" height="141.09" fill="#5b9cf8"/><rect x="290.4" y="666.97" width="75.6" height="66.03" fill="#62e39f"/><text x="252.8" y="584" font-size="10.5" fill="#333" text-anchor="middle" font-weight="bold" >82.75</text><text x="328.2" y="658.5" font-size="10.5" fill="#333" text-anchor="middle" font-weight="bold" >38.73</text><text transform="translate(46,643.4) rotate(-90)" font-size="12" fill="#444" text-anchor="middle">Hours</text><text x="290.4" y="758" font-size="12.9" fill="#55585e" text-anchor="middle" font-weight="normal" >Resource Management</text><rect x="106.5" y="766.8" width="11.5" height="12" rx="1" fill="#5b9cf8"/><text x="121.7" y="777.3" font-size="12.6" fill="#5a5d63" text-anchor="start" font-weight="normal" >Estimated Hours: 82.75h</text><rect x="272" y="766.8" width="11.5" height="12" rx="1" fill="#62e39f"/><text x="286.9" y="777.3" font-size="12.6" fill="#5a5d63" text-anchor="start" font-weight="normal" >Logged Hours: 38.73h</text><line x1="535.4" y1="638.90" x2="944.2" y2="638.90" stroke="#e8e9ec" stroke-width="1"/><text x="526" y="640.1999999999999" font-size="12" fill="#5a5d63" text-anchor="end" font-weight="normal" >0</text><line x1="535.4" y1="619.75" x2="944.2" y2="619.75" stroke="#e8e9ec" stroke-width="1"/><text x="526" y="621.05" font-size="12" fill="#5a5d63" text-anchor="end" font-weight="normal" >6</text><line x1="535.4" y1="600.60" x2="944.2" y2="600.60" stroke="#e8e9ec" stroke-width="1"/><text x="526" y="601.9" font-size="12" fill="#5a5d63" text-anchor="end" font-weight="normal" >12</text><line x1="535.4" y1="581.45" x2="944.2" y2="581.45" stroke="#e8e9ec" stroke-width="1"/><text x="526" y="582.7499999999999" font-size="12" fill="#5a5d63" text-anchor="end" font-weight="normal" >18</text><line x1="535.4" y1="562.30" x2="944.2" y2="562.30" stroke="#e8e9ec" stroke-width="1"/><text x="526" y="563.5999999999999" font-size="12" fill="#5a5d63" text-anchor="end" font-weight="normal" >24</text><line x1="535.40" y1="638.9" x2="535.40" y2="644.9" stroke="#e3e4e7" stroke-width="1"/><line x1="564.60" y1="638.9" x2="564.60" y2="644.9" stroke="#e3e4e7" stroke-width="1"/><line x1="593.80" y1="638.9" x2="593.80" y2="644.9" stroke="#e3e4e7" stroke-width="1"/><line x1="623.00" y1="638.9" x2="623.00" y2="644.9" stroke="#e3e4e7" stroke-width="1"/><line x1="652.20" y1="638.9" x2="652.20" y2="644.9" stroke="#e3e4e7" stroke-width="1"/><line x1="681.40" y1="638.9" x2="681.40" y2="644.9" stroke="#e3e4e7" stroke-width="1"/><line x1="710.60" y1="638.9" x2="710.60" y2="644.9" stroke="#e3e4e7" stroke-width="1"/><line x1="739.80" y1="638.9" x2="739.80" y2="644.9" stroke="#e3e4e7" stroke-width="1"/><line x1="769.00" y1="638.9" x2="769.00" y2="644.9" stroke="#e3e4e7" stroke-width="1"/><line x1="798.20" y1="638.9" x2="798.20" y2="644.9" stroke="#e3e4e7" stroke-width="1"/><line x1="827.40" y1="638.9" x2="827.40" y2="644.9" stroke="#e3e4e7" stroke-width="1"/><line x1="856.60" y1="638.9" x2="856.60" y2="644.9" stroke="#e3e4e7" stroke-width="1"/><line x1="885.80" y1="638.9" x2="885.80" y2="644.9" stroke="#e3e4e7" stroke-width="1"/><line x1="915.00" y1="638.9" x2="915.00" y2="644.9" stroke="#e3e4e7" stroke-width="1"/><line x1="944.20" y1="638.9" x2="944.20" y2="644.9" stroke="#e3e4e7" stroke-width="1"/><rect x="544.80" y="622.94" width="10.4" height="15.96" fill="#3e86f3"/><text x="550.00" y="614.94" font-size="10" fill="#2a2a2a" text-anchor="middle" font-weight="bold" >5</text><rect x="574.00" y="632.52" width="10.4" height="6.38" fill="#3e86f3"/><text x="579.20" y="624.52" font-size="10" fill="#2a2a2a" text-anchor="middle" font-weight="bold" >2</text><text transform="translate(586.20,648.9) rotate(-79)" font-size="12.9" fill="#5a5d63" text-anchor="end">Release 0.0.28 ...</text><rect x="603.20" y="632.52" width="10.4" height="6.38" fill="#3e86f3"/><text x="608.40" y="624.52" font-size="10" fill="#2a2a2a" text-anchor="middle" font-weight="bold" >2</text><text transform="translate(615.40,648.9) rotate(-79)" font-size="12.9" fill="#5a5d63" text-anchor="end">Flux_project_testi...</text><rect x="632.40" y="565.49" width="10.4" height="73.41" fill="#3e86f3"/><text x="637.60" y="563.00" font-size="10" fill="#2a2a2a" text-anchor="middle" font-weight="bold" >23</text><text transform="translate(644.60,648.9) rotate(-79)" font-size="12.9" fill="#5a5d63" text-anchor="end">Test dashboard</text><rect x="661.60" y="632.52" width="10.4" height="6.38" fill="#3e86f3"/><text x="666.80" y="624.52" font-size="10" fill="#2a2a2a" text-anchor="middle" font-weight="bold" >2</text><text transform="translate(673.80,648.9) rotate(-79)" font-size="12.9" fill="#5a5d63" text-anchor="end">Release 0.0.30 ...</text><rect x="690.80" y="626.13" width="10.4" height="12.77" fill="#3e86f3"/><text x="696.00" y="618.13" font-size="10" fill="#2a2a2a" text-anchor="middle" font-weight="bold" >4</text><text transform="translate(703.00,648.9) rotate(-79)" font-size="12.9" fill="#5a5d63" text-anchor="end">Release 0.0.31 ...</text><rect x="720.00" y="635.71" width="10.4" height="3.19" fill="#3e86f3"/><text x="725.20" y="627.71" font-size="10" fill="#2a2a2a" text-anchor="middle" font-weight="bold" >1</text><text transform="translate(732.20,648.9) rotate(-79)" font-size="12.9" fill="#5a5d63" text-anchor="end">Release 0.0.41 ...</text><rect x="749.20" y="635.71" width="10.4" height="3.19" fill="#3e86f3"/><text x="754.40" y="627.71" font-size="10" fill="#2a2a2a" text-anchor="middle" font-weight="bold" >1</text><text transform="translate(761.40,648.9) rotate(-79)" font-size="12.9" fill="#5a5d63" text-anchor="end">Release 0.0.32 ...</text><rect x="778.40" y="635.71" width="10.4" height="3.19" fill="#3e86f3"/><text x="783.60" y="627.71" font-size="10" fill="#2a2a2a" text-anchor="middle" font-weight="bold" >1</text><text transform="translate(790.60,648.9) rotate(-79)" font-size="12.9" fill="#5a5d63" text-anchor="end">Release 0.0.34 ...</text><rect x="807.60" y="635.71" width="10.4" height="3.19" fill="#3e86f3"/><text x="812.80" y="627.71" font-size="10" fill="#2a2a2a" text-anchor="middle" font-weight="bold" >1</text><text transform="translate(819.80,648.9) rotate(-79)" font-size="12.9" fill="#5a5d63" text-anchor="end">New_version_flux...</text><rect x="836.80" y="635.71" width="10.4" height="3.19" fill="#3e86f3"/><text x="842.00" y="627.71" font-size="10" fill="#2a2a2a" text-anchor="middle" font-weight="bold" >1</text><text transform="translate(849.00,648.9) rotate(-79)" font-size="12.9" fill="#5a5d63" text-anchor="end">Contrary to popul...</text><rect x="866.00" y="635.71" width="10.4" height="3.19" fill="#3e86f3"/><text x="871.20" y="627.71" font-size="10" fill="#2a2a2a" text-anchor="middle" font-weight="bold" >1</text><text transform="translate(878.20,648.9) rotate(-79)" font-size="12.9" fill="#5a5d63" text-anchor="end">Flux_theme_version</text><rect x="895.20" y="635.71" width="10.4" height="3.19" fill="#3e86f3"/><text x="900.40" y="627.71" font-size="10" fill="#2a2a2a" text-anchor="middle" font-weight="bold" >1</text><text transform="translate(907.40,648.9) rotate(-79)" font-size="12.9" fill="#5a5d63" text-anchor="end">Release 0.0.48 ...</text><rect x="924.40" y="635.71" width="10.4" height="3.19" fill="#3e86f3"/><text x="929.60" y="627.71" font-size="10" fill="#2a2a2a" text-anchor="middle" font-weight="bold" >1</text><text transform="translate(936.60,648.9) rotate(-79)" font-size="12.9" fill="#5a5d63" text-anchor="end">Release 0.0.36 ...</text><path d="M 465.2 196.5 L 465.2 183.8 Q 465.2 182 467.1 182 Q 469 182 469 183.8 L 469 188 L 476.5 188 Q 478.2 188 478.2 189.8 L 478.2 200 Q 478 203.5 475.5 205.5 L 467.5 205.5 L 461 198.5 Q 459.8 196.5 461.5 195.5 Q 463.2 194.8 465.2 196.5 Z" fill="#fff" stroke="#151515" stroke-width="1.3" stroke-linejoin="round"/>
<path d="M 469 188 V 193.2 M 471.9 188 V 193.2 M 474.9 188 V 193.2" stroke="#151515" stroke-width="1.1"/></svg>
</body></html>
